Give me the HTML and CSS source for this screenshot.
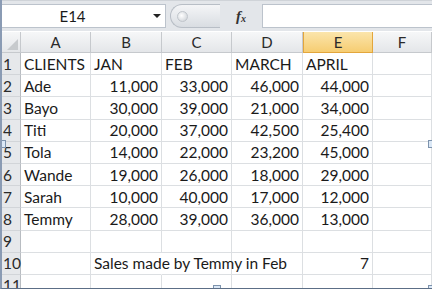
FILE: index.html
```html
<!DOCTYPE html>
<html lang="en">
<head>
  <meta charset="UTF-8" />
  <title>Sales sheet</title>
  <link rel="stylesheet" href="styles.css">
</head>
<body>
  <div class="frame">
    <div class="formula-bar">
      <div class="name-box">
        <span class="cell-ref">E14</span>
        <span class="arrow"></span>
      </div>
      <div class="splitter"><span class="knob"></span></div>
      <div class="fx"><i>f</i><small>x</small></div>
      <div class="formula-input"></div>
    </div>

    <div class="sheet">
      <div class="corner"></div>
      <div class="col-head">A</div>
      <div class="col-head">B</div>
      <div class="col-head">C</div>
      <div class="col-head">D</div>
      <div class="col-head active">E</div>
      <div class="col-head">F</div>

      <div class="row-head">1</div>
      <div class="cell">CLIENTS</div><div class="cell">JAN</div><div class="cell">FEB</div><div class="cell">MARCH</div><div class="cell">APRIL</div><div class="cell"></div>

      <div class="row-head">2</div>
      <div class="cell">Ade</div><div class="cell num">11,000</div><div class="cell num">33,000</div><div class="cell num">46,000</div><div class="cell num">44,000</div><div class="cell"></div>

      <div class="row-head">3</div>
      <div class="cell">Bayo</div><div class="cell num">30,000</div><div class="cell num">39,000</div><div class="cell num">21,000</div><div class="cell num">34,000</div><div class="cell"></div>

      <div class="row-head">4</div>
      <div class="cell">Titi</div><div class="cell num">20,000</div><div class="cell num">37,000</div><div class="cell num">42,500</div><div class="cell num">25,400</div><div class="cell"></div>

      <div class="row-head">5</div>
      <div class="cell">Tola</div><div class="cell num">14,000</div><div class="cell num">22,000</div><div class="cell num">23,200</div><div class="cell num">45,000</div><div class="cell"></div>

      <div class="row-head">6</div>
      <div class="cell">Wande</div><div class="cell num">19,000</div><div class="cell num">26,000</div><div class="cell num">18,000</div><div class="cell num">29,000</div><div class="cell"></div>

      <div class="row-head">7</div>
      <div class="cell">Sarah</div><div class="cell num">10,000</div><div class="cell num">40,000</div><div class="cell num">17,000</div><div class="cell num">12,000</div><div class="cell"></div>

      <div class="row-head">8</div>
      <div class="cell">Temmy</div><div class="cell num">28,000</div><div class="cell num">39,000</div><div class="cell num">36,000</div><div class="cell num">13,000</div><div class="cell"></div>

      <div class="row-head">9</div>
      <div class="cell"></div><div class="cell"></div><div class="cell"></div><div class="cell"></div><div class="cell"></div><div class="cell"></div>

      <div class="row-head">10</div>
      <div class="cell"></div><div class="cell overflow">Sales made by Temmy in Feb</div><div class="cell"></div><div class="cell"></div><div class="cell num">7</div><div class="cell"></div>

      <div class="row-head">11</div>
      <div class="cell"></div><div class="cell"></div><div class="cell"></div><div class="cell"></div><div class="cell"></div><div class="cell"></div>
    </div>

    <span class="handle handle-left"></span>
    <span class="handle handle-right"></span>
    <span class="handle handle-bottom"></span>
    <span class="handle handle-corner"></span>
  </div>
</body>
</html>
```

FILE: styles.css
```css
body {
  margin: 0;
  background: #fff;
  font-family: Lato, "Open Sans", sans-serif;
  color: #1a1a1a;
}

.frame {
  position: relative;
  width: 432px;
  height: 289px;
  overflow: hidden;
  box-sizing: border-box;
  border-left: 2px solid #8a9bb4;
  border-bottom: 1px solid #5c6e86;
  background: #fff;
}

/* formula bar */

.formula-bar {
  display: flex;
  align-items: stretch;
  height: 24px;
  padding: 3px 0;
  background: #e3e6ea;
  border-top: 1px solid #cfd3d8;
}

.name-box {
  width: 164px;
  display: flex;
  align-items: center;
  background: #fff;
  border: 1px solid #bcc3cc;
  border-left: none;
  box-sizing: border-box;
}

.cell-ref {
  flex: 1;
  text-align: center;
  font-size: 15px;
  padding-right: 10px;
  color: #1a1a1a;
}

.arrow {
  width: 0;
  height: 0;
  border-left: 4px solid transparent;
  border-right: 4px solid transparent;
  border-top: 4px solid #222;
  margin-right: 4px;
}

.splitter {
  width: 50px;
  box-sizing: border-box;
  margin-left: 4px;
  border-radius: 12px 0 0 12px;
  background: linear-gradient(#f4f5f7, #d9dde2);
  border: 1px solid #b8bec6;
  border-right: none;
  display: flex;
  align-items: center;
  padding-left: 6px;
}

.knob {
  width: 9px;
  height: 9px;
  border-radius: 50%;
  background: radial-gradient(circle at 40% 40%, #fff, #c8cdd3);
  border: 1px solid #c0c5cb;
}

.fx {
  width: 42px;
  display: flex;
  align-items: center;
  justify-content: center;
  font-family: "Liberation Serif", serif;
  font-size: 15px;
  color: #333;
  font-weight: bold;
}

.fx small {
  font-size: 10px;
  font-style: italic;
  margin-top: 4px;
}

.formula-input {
  flex: 1;
  background: #fff;
  border: 1px solid #bcc3cc;
  border-right: none;
}

/* sheet grid */

.sheet {
  display: grid;
  grid-template-columns: 19px 70px 71px 70px 71px 70px 1fr;
  grid-template-rows: 21px repeat(11, 22.2px);
  margin-top: 1px;
  font-size: 15.5px;
}

.corner,
.col-head,
.row-head {
  background: linear-gradient(#f6f7f8, #e4e6e9);
  color: #2a2a2a;
  border-right: 1px solid #c6c9cd;
  border-bottom: 1px solid #c6c9cd;
  box-sizing: border-box;
}

.corner {
  position: relative;
}

.corner::after {
  content: "";
  position: absolute;
  right: 2px;
  bottom: 2px;
  border-left: 11px solid transparent;
  border-bottom: 11px solid #c7cacd;
}

.col-head {
  display: flex;
  align-items: center;
  justify-content: center;
  font-size: 15px;
}

.col-head.active {
  background: linear-gradient(#fbe5ac, #f6cd72);
  border-right-color: #e3a63c;
  border-bottom-color: #e3a63c;
  border-left: 1px solid #e3a63c;
}

.row-head {
  display: flex;
  align-items: center;
  padding-left: 1px;
  background: #e6e8eb;
  border-right: 1px solid #b8bcc1;
  border-bottom: 1px solid #d2d5d9;
}

.cell {
  display: flex;
  align-items: center;
  padding: 0 3px;
  border-right: 1px solid #dcdfe2;
  border-bottom: 1px solid #dcdfe2;
  box-sizing: border-box;
  white-space: nowrap;
  min-width: 0;
}

.cell.num {
  justify-content: flex-end;
}

.cell.overflow {
  overflow: visible;
  border-right-color: transparent;
  position: relative;
  z-index: 1;
}

/* resize handles of the picture */

.handle {
  position: absolute;
  width: 6px;
  height: 6px;
  background: #dbe8f6;
  border: 1px solid #7d93ad;
  z-index: 2;
}

.handle-left {
  left: -4px;
  top: 140px;
}

.handle-right {
  right: -4px;
  top: 140px;
}

.handle-bottom {
  left: 211px;
  bottom: -5px;
}

.handle-corner {
  right: -4px;
  bottom: -5px;
}
```
